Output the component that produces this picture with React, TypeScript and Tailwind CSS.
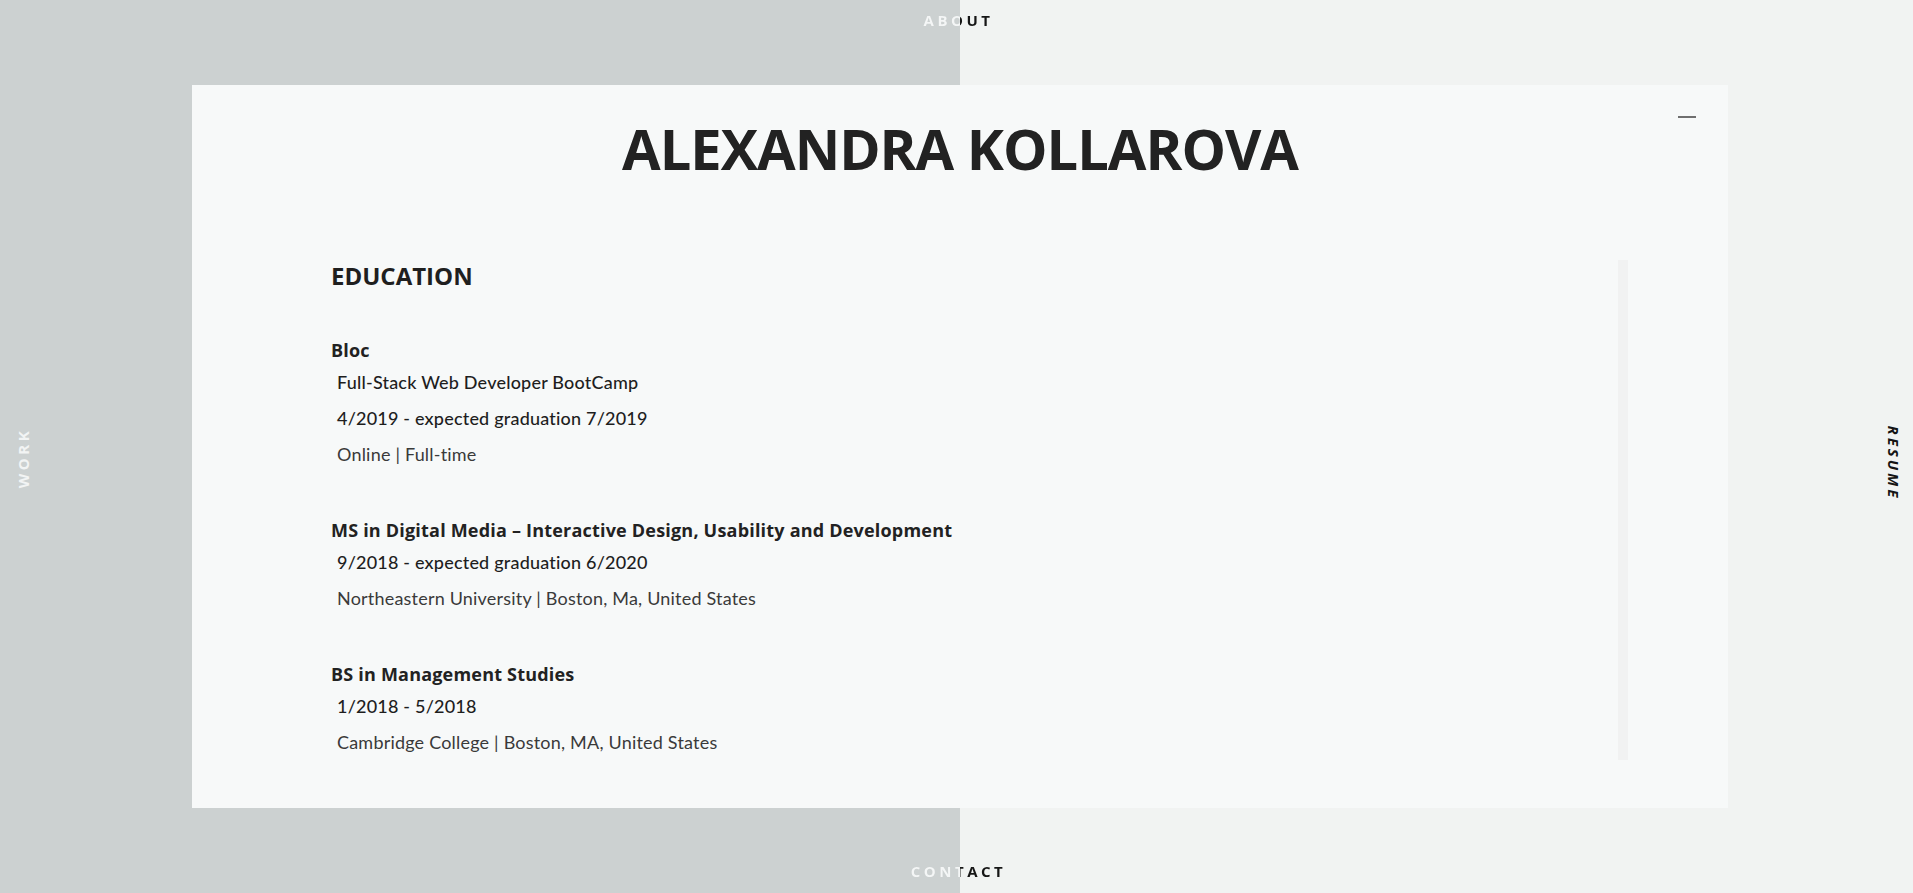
import { ReactNode } from 'react';

type Entry = {
  title: string;
  lines: string[];
  place: [string, string];
};

const education: Entry[] = [
  {
    title: 'Bloc',
    lines: ['Full-Stack Web Developer BootCamp', '4/2019 - expected graduation 7/2019'],
    place: ['Online', 'Full-time'],
  },
  {
    title: 'MS in Digital Media – Interactive Design, Usability and Development',
    lines: ['9/2018 - expected graduation 6/2020'],
    place: ['Northeastern University', 'Boston, Ma, United States'],
  },
  {
    title: 'BS in Management Studies',
    lines: ['1/2018 - 5/2018'],
    place: ['Cambridge College', 'Boston, MA, United States'],
  },
];

const heading = "font-['Open_Sans',sans-serif]";
const body = "font-['Lato',sans-serif]";

function SplitLabel({ children }: { children: ReactNode }) {
  // text is white over the gray half and dark over the light half
  return (
    <div
      className={`w-full pl-[4px] text-center text-[15px] font-bold tracking-[3.5px] bg-[linear-gradient(to_right,#f4f6f6_960px,#161616_960px)] bg-clip-text text-transparent ${heading}`}
    >
      {children}
    </div>
  );
}

function EducationEntry({ entry }: { entry: Entry }) {
  return (
    <div className="mt-[44px]">
      <h3 className={`text-[18px] leading-[28px] font-bold tracking-[0.2px] text-[#222] ${heading}`}>
        {entry.title}
      </h3>
      {entry.lines.map((line) => (
        <p
          key={line}
          className={`pl-[6px] text-[18px] leading-[36px] font-medium tracking-[0.2px] text-[#1e1e1e] ${body}`}
        >
          {line}
        </p>
      ))}
      <p className={`pl-[6px] text-[18px] leading-[36px] font-normal tracking-[0.2px] text-[#3a3a3a] ${body}`}>
        {entry.place[0]} | {entry.place[1]}
      </p>
    </div>
  );
}

export default function App() {
  return (
    <div className="relative flex h-[893px] w-full items-center overflow-hidden bg-[linear-gradient(to_right,#ccd1d1_960px,#f1f3f2_960px)]">
      <nav>
        <div className="absolute top-0 left-0 right-0 flex h-[41px] items-center">
          <SplitLabel>ABOUT</SplitLabel>
        </div>
        <div className="absolute bottom-0 left-0 right-0 flex h-[43px] items-center">
          <SplitLabel>CONTACT</SplitLabel>
        </div>
        <div
          className={`absolute left-[23px] top-[458px] -translate-x-1/2 -translate-y-1/2 -rotate-90 text-[15px] font-bold tracking-[3.5px] text-[#f2f4f4] ${heading}`}
        >
          WORK
        </div>
        <div
          className={`absolute left-[1894px] top-[463px] -translate-x-1/2 -translate-y-1/2 rotate-90 text-[15px] font-bold italic tracking-[3px] text-[#141414] ${heading}`}
        >
          RESUME
        </div>
      </nav>

      <main className="relative ml-[192px] flex h-[723px] w-[1536px] flex-col bg-[#f7f9f9]">
        <button className="absolute top-[30px] right-[32px] flex h-[4px] w-[18px] items-center">
          <span className="h-[2px] w-full bg-[#6f6f6f]" />
        </button>

        <h1
          className={`mt-[33px] text-center text-[56px] leading-[60px] font-bold tracking-[-1px] text-[#222] ${heading}`}
        >
          ALEXANDRA KOLLAROVA
        </h1>

        <div className="mt-[82px] ml-[139px] flex w-[1297px]">
          <section className="h-[500px] flex-1 overflow-hidden">
            <h2 className={`text-[24px] leading-[32px] font-bold text-[#1f1f1f] ${heading}`}>EDUCATION</h2>
            {education.map((entry) => (
              <EducationEntry key={entry.title} entry={entry} />
            ))}
          </section>
          <div className="h-[500px] w-[10px] bg-[#f1f2f2]" />
        </div>
      </main>
    </div>
  );
}
